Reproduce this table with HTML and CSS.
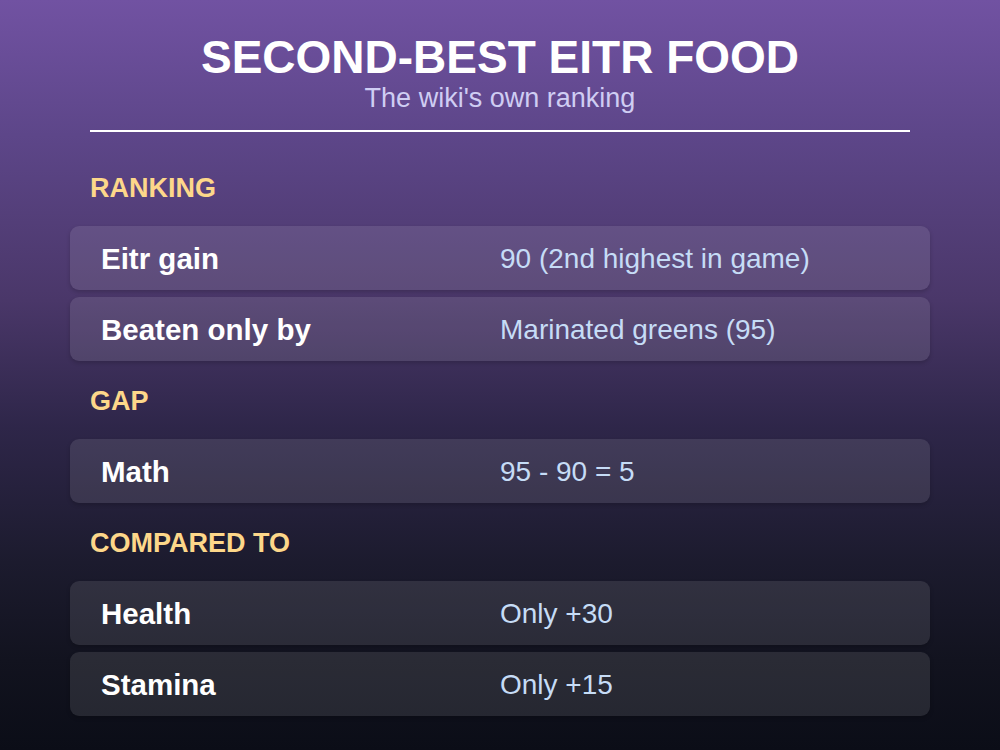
FILE: index.html
```html
<!DOCTYPE html>
<html lang="en">
<head>
<meta charset="utf-8">
<title>Second-Best Eitr Food</title>
<link rel="stylesheet" href="styles.css">
</head>
<body>
<div class="page">
  <header class="header">
    <h1 class="title">SECOND-BEST EITR FOOD</h1>
    <p class="subtitle">The wiki's own ranking</p>
    <div class="divider"></div>
  </header>
  <main class="content">
    <section class="section">
      <h2 class="section-title">RANKING</h2>
      <div class="rows">
        <div class="row"><span class="label">Eitr gain</span><span class="value">90 (2nd highest in game)</span></div>
        <div class="row"><span class="label">Beaten only by</span><span class="value">Marinated greens (95)</span></div>
      </div>
    </section>
    <section class="section">
      <h2 class="section-title">GAP</h2>
      <div class="rows">
        <div class="row"><span class="label">Math</span><span class="value">95 - 90 = 5</span></div>
      </div>
    </section>
    <section class="section">
      <h2 class="section-title">COMPARED TO</h2>
      <div class="rows">
        <div class="row"><span class="label">Health</span><span class="value">Only +30</span></div>
        <div class="row"><span class="label">Stamina</span><span class="value">Only +15</span></div>
      </div>
    </section>
  </main>
</div>
</body>
</html>
```
FILE: styles.css
```css
* { box-sizing: border-box; }
html, body {
  margin: 0;
  padding: 0;
}
body {
  width: 1000px;
  height: 750px;
  overflow: hidden;
  font-family: "Liberation Sans", Arial, sans-serif;
  background: linear-gradient(180deg, #7152a2 0%, #5d4689 18%, #4a3769 40%, #2e2649 57%, #1c1b2e 75%, #12131f 88%, #0b0d17 100%);
  color: #ffffff;
}
.page {
  padding: 31px 70px 0;
}
.header {
  text-align: center;
}
.title {
  margin: 0;
  font-size: 46px;
  line-height: 52px;
  font-weight: 700;
  color: #ffffff;
}
.subtitle {
  margin: 0;
  font-size: 27px;
  line-height: 31px;
  color: #cfcdf3;
}
.divider {
  height: 2px;
  margin: 16px 20px 0;
  background: #ffffff;
}
.content {
  display: flex;
  flex-direction: column;
}
.section-title {
  margin: 25.5px 0 22.5px 20px;
  font-size: 27px;
  line-height: 30px;
  font-weight: 700;
  color: #fdd78a;
}
.section:first-child .section-title {
  margin-top: 41px;
}
.rows {
  display: flex;
  flex-direction: column;
  gap: 7px;
}
.row {
  display: grid;
  grid-template-columns: 399px 1fr;
  align-items: center;
  height: 64px;
  padding: 3px 28px 0 31px;
  border-radius: 9px;
  background: rgba(255, 255, 255, 0.1);
  box-shadow: 0 2px 4px rgba(0, 0, 0, 0.18);
}
.label {
  font-size: 29.5px;
  font-weight: 700;
  color: #ffffff;
}
.value {
  font-size: 28px;
  color: #c6dcf6;
}
```
